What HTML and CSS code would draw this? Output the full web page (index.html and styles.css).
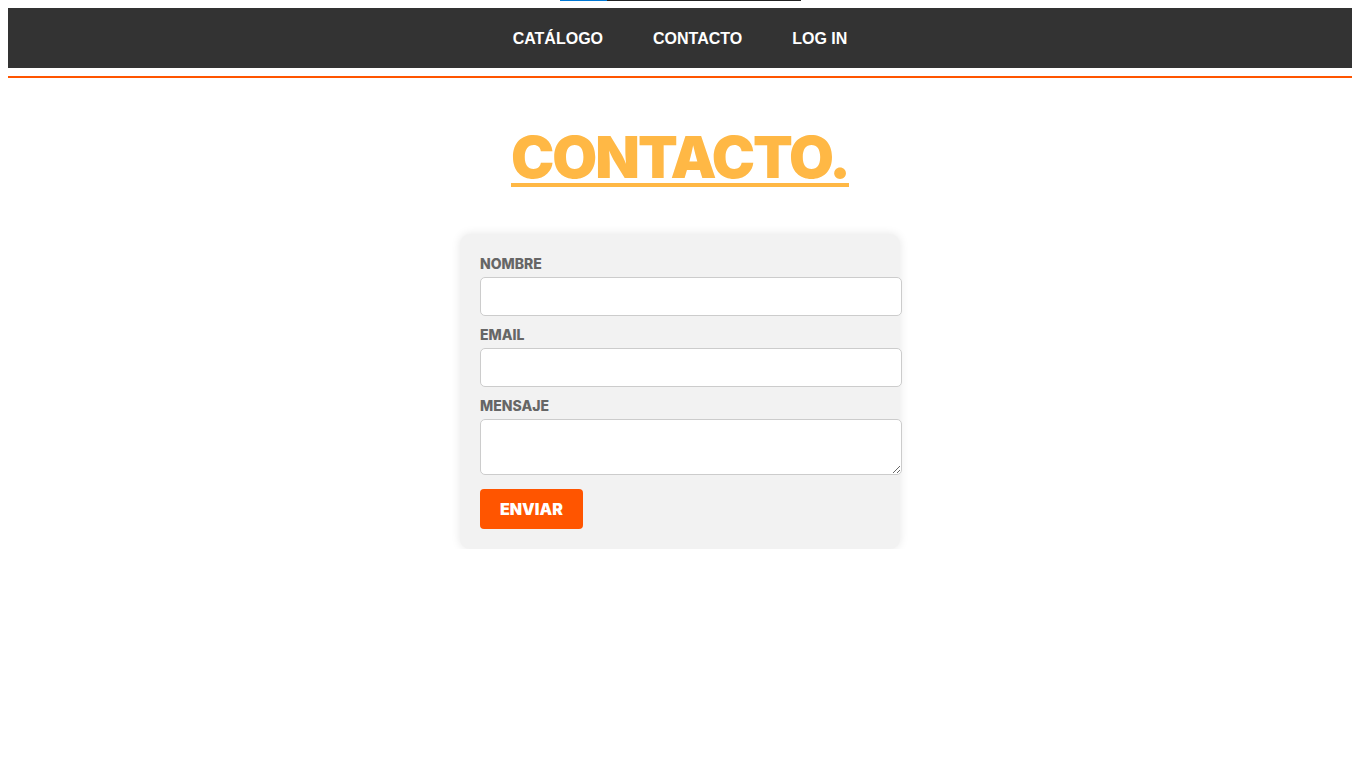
FILE: index.html
```html
<!DOCTYPE html>
<html lang="es">
<head>
<meta charset="utf-8">
<title>Contacto</title>
<link rel="stylesheet" href="styles.css">
</head>
<body>
<div class="topstrip"><span class="topstrip-blue"></span><span class="topstrip-dark"></span></div>
<nav class="nav">
  <a class="nav-link" href="#">CATÁLOGO</a>
  <a class="nav-link" href="#">CONTACTO</a>
  <a class="nav-link" href="#">LOG IN</a>
</nav>
<div class="rule"></div>
<main class="main">
  <h1 class="title">CONTACTO.</h1>
  <form class="card">
    <label class="label" for="nombre">NOMBRE</label>
    <input class="field" id="nombre" type="text">
    <label class="label" for="email">EMAIL</label>
    <input class="field" id="email" type="email">
    <label class="label" for="mensaje">MENSAJE</label>
    <textarea class="field area" id="mensaje" rows="2"></textarea>
    <button class="btn" type="button">ENVIAR</button>
  </form>
</main>
</body>
</html>
```
FILE: styles.css
```css
body {
  margin: 8px;
  font-family: "Liberation Sans", Arial, sans-serif;
  background: #fff;
}
.topstrip {
  position: absolute;
  top: 0;
  left: 560px;
  display: flex;
  height: 1px;
}
.topstrip-blue { width: 47px; background: #0078d4; }
.topstrip-dark { width: 194px; background: #222; }
.nav {
  height: 60px;
  box-sizing: border-box;
  padding-top: 2px;
  background: #333;
  display: flex;
  justify-content: center;
  align-items: center;
}
.nav-link {
  color: #fff;
  text-decoration: none;
  font-weight: 700;
  font-size: 16px;
  padding: 0 25px;
}
.rule {
  margin-top: 8px;
  height: 2px;
  background: #ff5500;
}
.main {
  display: flex;
  flex-direction: column;
  align-items: center;
}
.title {
  font-family: Inter, "Noto Sans", sans-serif;
  font-weight: 900;
  font-size: 58px;
  color: #ffb845;
  text-decoration: underline;
  text-decoration-thickness: 4px;
  text-underline-offset: 5px;
  margin: 44px 0 42px;
  letter-spacing: -2px;
}
.card {
  box-sizing: content-box;
  width: 400px;
  padding: 21px 20px 20px;
  background: #f2f2f2;
  border-radius: 10px;
  box-shadow: 0 0 10px rgba(0,0,0,0.1);
}
.label {
  display: block;
  font-family: Inter, "Noto Sans", sans-serif;
  font-weight: 800;
  font-size: 14px;
  line-height: 17px;
  color: #666;
  margin-bottom: 5px;
}
.field {
  display: block;
  width: 100%;
  padding: 10px;
  border: 1px solid #ccc;
  border-radius: 5px;
  font-size: 16px;
  line-height: 17px;
  height: 17px;
  margin: 0 0 10px;
  background: #fff;
  font-family: "Liberation Sans", Arial, sans-serif;
}
.area {
  height: 34px;
  resize: vertical;
  margin-bottom: 14px;
}
.btn {
  display: block;
  background: #ff5500;
  color: #fff;
  border: none;
  border-radius: 4px;
  font-family: Inter, "Noto Sans", sans-serif;
  font-weight: 900;
  font-size: 16px;
  height: 40px;
  padding: 0 20px;
  letter-spacing: 0;
}
```
